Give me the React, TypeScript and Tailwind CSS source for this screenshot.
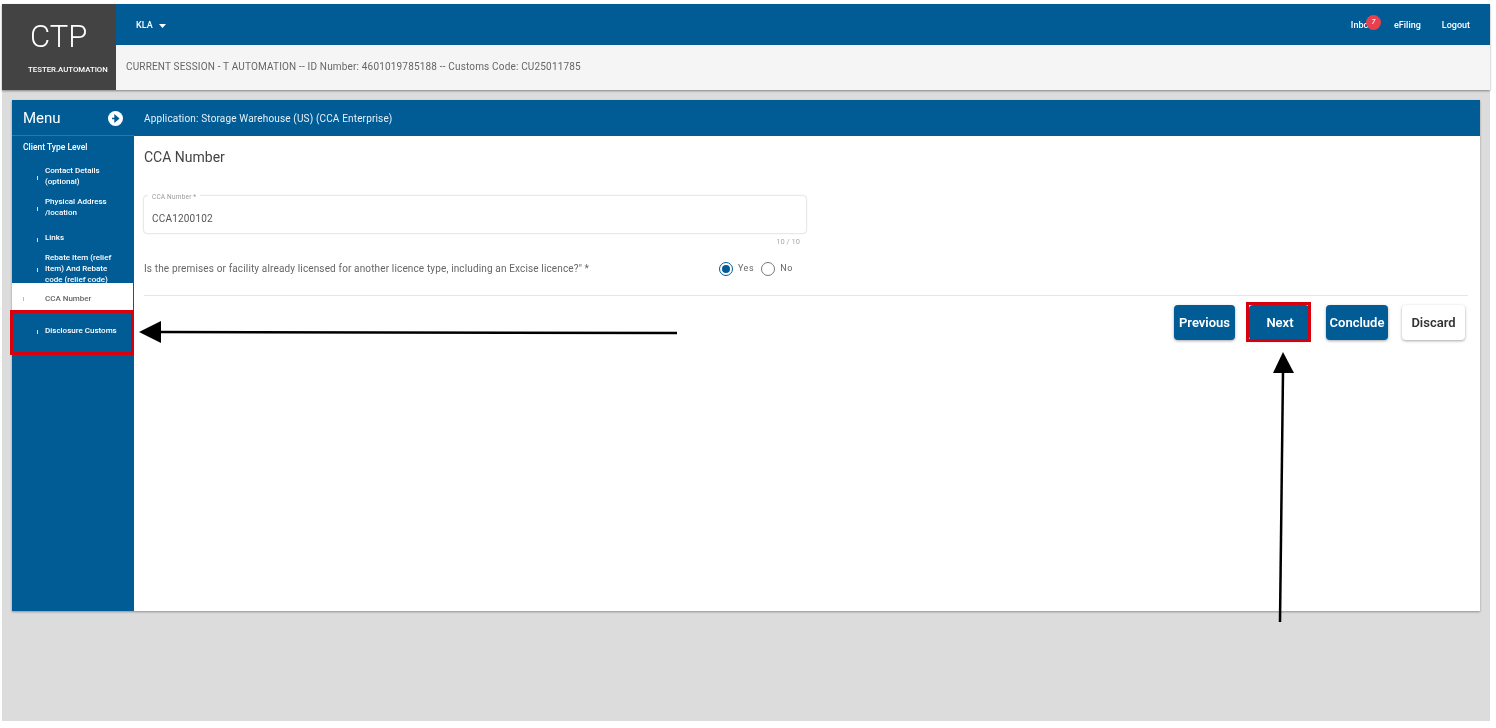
const font = "[font-family:Roboto,'Liberation_Sans',sans-serif]";

function SideItem({ lines, h, active, extra }: { lines: string[]; h: string; active?: boolean; extra?: string }) {
  return (
    <div className={`relative flex items-center pl-[33px] ${h} ${extra ?? ""} ${active ? "mr-px bg-white text-[#666]" : "text-white"}`}>
      <span className={`absolute top-1/2 h-[4px] w-px ${active ? "left-[11px] bg-[#bbb]" : "left-[25px] bg-[#cfe0ee]"}`} />
      <div className="text-[8px] leading-[11px] font-medium">
        {lines.map((l) => (
          <div key={l}>{l}</div>
        ))}
      </div>
    </div>
  );
}

function Btn({ label, light, w }: { label: string; light?: boolean; w: string }) {
  return (
    <button
      className={`flex h-[35px] items-center justify-center rounded-[4px] text-[13px] font-semibold shadow-[0_1px_3px_rgba(0,0,0,0.35)] ${w} ${
        light ? "bg-white text-[#333]" : "bg-[#015c96] text-white"
      }`}
    >
      {label}
    </button>
  );
}

export default function App() {
  return (
    <div className={`${font} relative h-[728px] w-[1496px] overflow-hidden bg-white pt-[4px] pr-[6px] pb-[7px] pl-[2px]`}>
      <div className="flex h-full flex-col bg-[#dcdcdc] blur-[0.4px]">
        <header className="flex h-[86px] shrink-0 shadow-[0_1px_2px_rgba(0,0,0,0.4)]">
          <div className="flex w-[114px] shrink-0 flex-col bg-[#434343] text-white">
            <div className="mt-[13px] ml-[28px] text-[31px] leading-[40px] font-light">CTP</div>
            <div className="mt-[8px] ml-[26px] text-[7.8px] leading-[10px] font-medium">TESTER.AUTOMATION</div>
          </div>
          <div className="flex flex-1 flex-col">
            <div className="flex h-[41px] items-center justify-between bg-[#015c96] pt-[2px] pr-[20px] pl-[20px] text-[9px] font-medium text-white">
              <div className="flex items-center gap-[6px]">
                <span>KLA</span>
                <svg width="7" height="4" viewBox="0 0 7 4">
                  <path d="M0 0h7L3.5 4z" fill="#fff" />
                </svg>
              </div>
              <div className="flex items-center">
                <div className="relative mr-[21px]">
                  Inbox
                  <span className="absolute -top-[4px] left-[15px] flex h-[15px] w-[15px] items-center justify-center rounded-full bg-[#e8404f] text-[7px] italic">
                    7
                  </span>
                </div>
                <span className="mr-[21px]">eFiling</span>
                <span>Logout</span>
              </div>
            </div>
            <div className="flex flex-1 items-center bg-[#f5f5f5] pb-[2px] pl-[10px] text-[10px] tracking-[0.17px] text-[#666]">
              CURRENT SESSION - T AUTOMATION -- ID Number: 4601019785188 -- Customs Code: CU25011785
            </div>
          </div>
        </header>

        <main className="mt-[10px] mr-[10px] ml-[10px] flex h-[511px] shadow-[0_1px_2px_rgba(0,0,0,0.35)]">
          <aside className="flex w-[122px] shrink-0 flex-col bg-[#015c96] text-white">
            <div className="flex h-[36px] items-center justify-between border-b border-[#2b78a8] pt-[2px] pr-[11px] pl-[11px]">
              <span className="text-[15px]">Menu</span>
              <svg width="15" height="15" viewBox="0 0 15 15">
                <circle cx="7.5" cy="7.5" r="7.5" fill="#fff" />
                <path d="M4 7.5h4M7 4.5l3.5 3-3.5 3z" fill="#015c96" stroke="#015c96" strokeWidth="1.4" />
              </svg>
            </div>
            <div className="pt-[6px] pl-[11px] text-[8.5px] leading-[11px] font-medium">Client Type Level</div>
            <div className="mt-[7px]">
              <SideItem lines={["Contact Details", "(optional)"]} h="h-[31px]" />
              <SideItem lines={["Physical Address", "/location"]} h="h-[31px]" />
              <SideItem lines={["Links"]} h="h-[31px]" />
              <SideItem lines={["Rebate Item (relief", "Item) And Rebate", "code (relief code)"]} h="h-[30px]" />
              <SideItem lines={["CCA Number"]} h="h-[27px]" active extra="pt-[4px]" />
              <SideItem lines={["Disclosure Customs"]} h="h-[40px]" />
            </div>
          </aside>

          <section className="flex flex-1 flex-col bg-white">
            <div className="flex h-[36px] shrink-0 items-center bg-[#015c96] pl-[10px] text-[10px] tracking-[0.16px] text-[#e8f0f6]">
              Application: Storage Warehouse (US) (CCA Enterprise)
            </div>
            <div className="flex flex-1 flex-col pt-[12px] pr-[12px] pl-[10px]">
              <h1 className="text-[14px] leading-[18px] text-[#444]">CCA Number</h1>
              <div className="relative mt-[30px] flex h-[37px] w-[662px] items-center rounded-[3px] bg-white pt-[7px] pl-[8px] text-[10px] tracking-[0.2px] text-[#555] shadow-[0_0_2px_rgba(0,0,0,0.35)]">
                <span className="absolute -top-[3px] left-[4px] bg-white px-[4px] text-[6.5px] leading-[8px] text-[#999]">CCA Number *</span>
                CCA1200102
              </div>
              <div className="mt-[5px] w-[656px] text-right text-[7.5px] leading-[8px] text-[#aaa]">10 / 10</div>
              <div className="mt-[7px] flex h-[30px] w-[662px] items-center text-[10px] tracking-[0.14px] text-[#666]">
                <span className="flex-1">Is the premises or facility already licensed for another licence type, including an Excise licence?" *</span>
                <span className="mr-[13px] flex items-center pt-[1px] text-[9px] tracking-[0.6px]">
                  <span className="mr-[5px] flex h-[14px] w-[14px] items-center justify-center rounded-full border border-[#015c96]">
                    <span className="h-[8px] w-[8px] rounded-full bg-[#015c96]" />
                  </span>
                  Yes
                  <span className="mr-[5px] ml-[7px] h-[14px] w-[14px] rounded-full border border-[#777]" />
                  No
                </span>
              </div>
              <div className="mt-[12px] border-t border-[#e6e6e6]" />
              <div className="mt-[9px] flex justify-end pr-[3px]">
                <Btn label="Previous" w="w-[61px] mr-[14px]" />
                <Btn label="Next" w="w-[60px] mr-[17px] pl-[2px]" />
                <Btn label="Conclude" w="w-[62px] mr-[14px]" />
                <Btn label="Discard" light w="w-[63px]" />
              </div>
            </div>
          </section>
        </main>
      </div>

      <div className="absolute top-[310px] left-[10px] h-[45px] w-[124px] border-[3px] border-[#d9000d]" />
      <div className="absolute top-[302px] left-[1246px] h-[40px] w-[65px] border-[3px] border-[#d9000d]" />
      <svg className="absolute top-0 left-0" width="1496" height="728" viewBox="0 0 1496 728" fill="none">
        <path d="M158 332 L677 333" stroke="#000" strokeWidth="2.5" />
        <path d="M139 332 L161 321 V343 Z" fill="#000" />
        <path d="M1283 372 L1280 622" stroke="#000" strokeWidth="2.5" />
        <path d="M1283 352 L1273 373 H1294 Z" fill="#000" />
      </svg>
    </div>
  );
}
